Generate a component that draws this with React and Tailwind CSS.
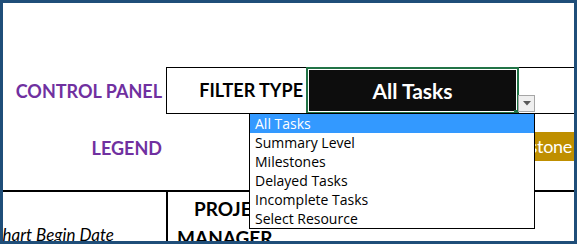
const filterOptions = [
  "All Tasks",
  "Summary Level",
  "Milestones",
  "Delayed Tasks",
  "Incomplete Tasks",
  "Select Resource",
];

function FilterList() {
  return (
    <div className="absolute left-[246px] top-[110px] w-[286px] h-[116px] border border-black bg-white z-20 font-['Open_Sans',sans-serif] text-[14px] leading-[19px]">
      {filterOptions.map((opt, i) => (
        <div
          key={opt}
          className={
            i === 0
              ? "h-[19px] pl-[5px] bg-[#3399ff] text-white whitespace-nowrap"
              : "h-[19px] pl-[5px] text-black whitespace-nowrap"
          }
        >
          {opt}
        </div>
      ))}
    </div>
  );
}

function App() {
  return (
    <div className="relative w-[577px] h-[244px] overflow-hidden border-[3px] border-[#1f4e79] bg-white font-['Lato',sans-serif]">
      {/* empty rows above the panel */}
      <div className="h-[64px]" />

      {/* control panel row */}
      <div className="flex h-[47px]">
        <div className="w-[163px] flex items-center justify-end pr-[4px] pt-[1px] text-[18px] font-bold text-[#7030a0] whitespace-nowrap">
          CONTROL PANEL
        </div>
        <div className="w-[140px] flex items-center justify-end pr-[3px] border-l border-t border-b border-black text-[18px] font-bold text-black whitespace-nowrap">
          FILTER TYPE
        </div>
        <div className="w-[213px] border-2 border-[#217346] p-[1px]">
          <div className="h-full bg-[#0d0d0d] flex items-center justify-center text-[21px] font-bold text-white">
            All Tasks
          </div>
        </div>
        <div className="flex-1 border-t border-b border-black" />
      </div>

      {/* legend row */}
      <div className="flex h-[76px]">
        <div className="w-[163px] flex justify-end pr-[4px] pt-[25px] text-[18px] leading-none font-bold text-[#7030a0]">
          LEGEND
        </div>
        <div className="ml-auto mt-[18px] w-[55px] h-[29px] bg-[#bf8f00] overflow-hidden flex items-center justify-end pr-[2px] text-[18px] tracking-[-0.3px] text-white whitespace-nowrap">
          Milestone
        </div>
      </div>

      <div className="h-[2px] bg-black" />

      {/* details row */}
      <div className="flex h-[49px]">
        <div className="w-[163px] overflow-hidden flex justify-end pr-[52px] pt-[34px] text-[17px] leading-none italic text-black whitespace-nowrap">
          Chart Begin Date
        </div>
        <div className="flex-1 border-l-2 border-black pl-[9px] pt-[2px] text-[19px] leading-[29px] font-bold text-black whitespace-nowrap">
          <div className="pl-[17px]">PROJECT</div>
          <div>MANAGER</div>
        </div>
      </div>

      {/* fill handle + dropdown button + open list */}
      <div className="absolute left-[511px] top-[107px] w-[5px] h-[5px] bg-[#217346] z-10" />
      <div className="absolute left-[515px] top-[92px] w-[17px] h-[17px] border border-[#a6a6a6] bg-[#efefef] flex items-center justify-center z-10">
        <svg width="8" height="5" viewBox="0 0 8 5">
          <path d="M0 0 L8 0 L4 4.5 Z" fill="#595959" />
        </svg>
      </div>
      <FilterList />
    </div>
  );
}

export default App;
